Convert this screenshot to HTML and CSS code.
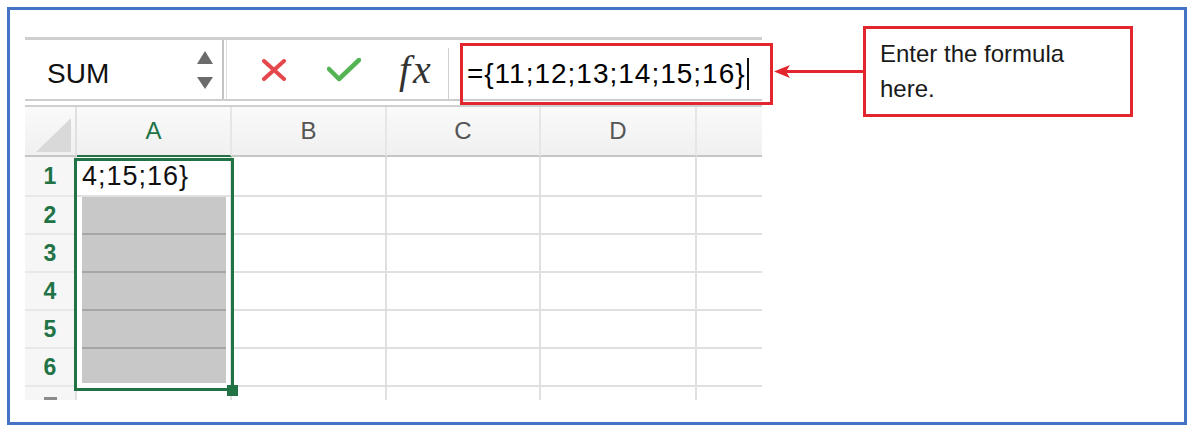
FILE: index.html
```html
<!DOCTYPE html>
<html lang="en">

<head>
    <meta charset="UTF-8">
    <title>Array formula</title>
    <link rel="stylesheet" href="styles.css">
</head>

<body>
    <div class="frame">
        <div class="sheet">

            <div class="toolbar">
                <div class="namebox">
                    <span class="name">SUM</span>
                    <svg class="spin" width="16" height="38" viewBox="0 0 16 38">
                        <polygon points="8,0 16,13 0,13" />
                        <polygon points="0,26 16,26 8,38" />
                    </svg>
                </div>
                <div class="formula">
                    <svg class="cancel" width="26" height="22" viewBox="0 0 26 22">
                        <path d="M3 2 L23 20 M23 2 L3 20" />
                    </svg>
                    <svg class="enter" width="34" height="24" viewBox="0 0 34 24">
                        <path d="M2 11 L12 21 L32 2" />
                    </svg>
                    <span class="fx">fx</span>
                    <span class="sep"></span>
                    <span class="input">={11;12;13;14;15;16}<i class="caret"></i></span>
                </div>
            </div>

            <div class="grid">
                <div class="cell corner">
                    <svg width="35" height="34" viewBox="0 0 35 34">
                        <polygon points="35,0 35,34 0,34" />
                    </svg>
                </div>
                <div class="cell head on">A</div>
                <div class="cell head">B</div>
                <div class="cell head">C</div>
                <div class="cell head">D</div>
                <div class="cell head last"></div>

                <div class="cell num first">1</div>
                <div class="cell first text">4;15;16}</div>
                <div class="cell first"></div>
                <div class="cell first"></div>
                <div class="cell first"></div>
                <div class="cell first last"></div>

                <div class="cell num">2</div>
                <div class="cell gray"><div class="fill"></div></div>
                <div class="cell"></div>
                <div class="cell"></div>
                <div class="cell"></div>
                <div class="cell last"></div>

                <div class="cell num">3</div>
                <div class="cell gray"><div class="fill"></div></div>
                <div class="cell"></div>
                <div class="cell"></div>
                <div class="cell"></div>
                <div class="cell last"></div>

                <div class="cell num">4</div>
                <div class="cell gray"><div class="fill"></div></div>
                <div class="cell"></div>
                <div class="cell"></div>
                <div class="cell"></div>
                <div class="cell last"></div>

                <div class="cell num">5</div>
                <div class="cell gray"><div class="fill"></div></div>
                <div class="cell"></div>
                <div class="cell"></div>
                <div class="cell"></div>
                <div class="cell last"></div>

                <div class="cell num">6</div>
                <div class="cell gray"><div class="fill end"></div></div>
                <div class="cell"></div>
                <div class="cell"></div>
                <div class="cell"></div>
                <div class="cell last"></div>

                <div class="cell num cut"><span class="dash"></span></div>
                <div class="cell cut"></div>
                <div class="cell cut"></div>
                <div class="cell cut"></div>
                <div class="cell cut"></div>
                <div class="cell cut last"></div>

                <div class="selection"></div>
                <div class="handle"></div>
            </div>

        </div>

        <!-- annotation drawn over the screenshot -->
        <div class="highlight"></div>
        <svg class="arrow" width="92" height="20" viewBox="0 0 92 20">
            <line x1="12" y1="9.5" x2="92" y2="9.5" />
            <polygon points="1,9.5 17,3 13,9.5 17,16" />
        </svg>
        <div class="callout">Enter the formula<br>here.</div>
    </div>
</body>

</html>
```

FILE: styles.css
```css
* {
    margin: 0;
    padding: 0;
    box-sizing: border-box;
}

body {
    background: #fff;
    font-family: "Liberation Sans", Arial, sans-serif;
    color: #1c1c1c;
}

.frame {
    position: relative;
    width: 1180px;
    height: 418px;
    margin: 7px 0 0 7px;
    border: 3px solid #4472c4;
}

.sheet {
    width: 752px;
    padding: 27px 0 0 15px;
}

/* name box + formula bar */
.toolbar {
    display: flex;
    height: 64px;
    border-top: 3px solid #cfcfcf;
    border-bottom: 2px solid #cdcdcd;
}

.namebox {
    display: flex;
    align-items: center;
    justify-content: space-between;
    width: 199px;
    padding: 0 9px 0 22px;
    border-right: 2px solid #c4c4c4;
}

.name {
    font-size: 28px;
    padding-top: 8px;
    color: #111;
}

.spin polygon {
    fill: #6b6b6b;
}

.formula {
    display: flex;
    align-items: center;
    flex: 1;
    margin-left: 2px;
    border-left: 1px solid #dddddd;
}

.cancel {
    margin-left: 34px;
}

.cancel path {
    stroke: #e4484c;
    stroke-width: 4;
    stroke-linecap: round;
    fill: none;
}

.enter {
    margin-left: 40px;
}

.enter path {
    stroke: #52b452;
    stroke-width: 4.5;
    stroke-linecap: round;
    stroke-linejoin: round;
    fill: none;
}

.fx {
    margin-left: 38px;
    font-family: "Liberation Serif", "Times New Roman", serif;
    font-style: italic;
    font-size: 40px;
    letter-spacing: 3px;
    color: #333;
}

.sep {
    width: 1px;
    height: 52px;
    margin: 8px 0 0 14px;
    background: #d0d0d0;
}

.input {
    display: flex;
    align-items: center;
    margin-left: 18px;
    padding-top: 8px;
    font-size: 28px;
    letter-spacing: 1px;
    color: #000;
}

.caret {
    width: 2px;
    height: 32px;
    margin-left: 1px;
    background: #111;
}

/* worksheet */
.grid {
    position: relative;
    display: grid;
    grid-template-columns: 52px 155px 155px 154px 156px 65px;
    grid-template-rows: 50px 40px 38px 38px 38px 38px 38px 13px;
    margin-top: 4px;
    border-top: 2px solid #cfcfcf;
}

.cell {
    display: flex;
    align-items: center;
    border-right: 2px solid #e0e0e0;
    border-bottom: 2px solid #e0e0e0;
}

.cell.last {
    border-right: none;
}

.head {
    justify-content: center;
    font-size: 24px;
    color: #555;
    background: linear-gradient(#fafafa, #f0f0f0);
    border-right-color: #e6e6e6;
    border-bottom: 2px solid #c6c6c6;
}

.head.on {
    color: #217346;
    border-bottom-color: #217346;
}

.corner {
    justify-content: flex-end;
    align-items: flex-end;
    padding: 0 4px 3px 0;
    background: linear-gradient(#fafafa, #f0f0f0);
    border-bottom: 2px solid #c6c6c6;
}

.corner polygon {
    fill: #d9d9d9;
}

.num {
    justify-content: center;
    font-size: 23px;
    font-weight: bold;
    color: #217346;
    background: #f6f6f6;
    border-bottom-color: #e8e8e8;
}

.text {
    padding-left: 5px;
    font-size: 27px;
    letter-spacing: 1px;
    color: #111;
}

.gray {
    align-items: stretch;
    padding: 0 4px 0 5px;
    border-bottom: none;
}

.fill {
    flex: 1;
    background: #c8c8c8;
    border-bottom: 2px solid #a6a6a6;
}

.fill.end {
    margin-bottom: 4px;
    border-bottom: none;
}

.cut {
    align-items: flex-end;
    border-bottom: none;
}

.dash {
    width: 13px;
    height: 3px;
    margin-bottom: 0;
    background: #8a8a8a;
}

.selection {
    position: absolute;
    left: 49px;
    top: 51px;
    width: 160px;
    height: 233px;
    border: 3px solid #217346;
}

.handle {
    position: absolute;
    left: 202px;
    top: 278px;
    width: 11px;
    height: 11px;
    background: #217346;
}

/* red annotation */
.highlight {
    position: absolute;
    left: 450px;
    top: 33px;
    width: 313px;
    height: 62px;
    border: 3px solid #e3262d;
}

.arrow {
    position: absolute;
    left: 763px;
    top: 52px;
}

.arrow line {
    stroke: #e3262d;
    stroke-width: 3;
}

.arrow polygon {
    fill: #e3262d;
}

.callout {
    position: absolute;
    left: 853px;
    top: 16px;
    width: 270px;
    height: 91px;
    padding: 7px 0 0 14px;
    border: 3px solid #e3262d;
    font-size: 24px;
    line-height: 35px;
    color: #1a1a1a;
}
```
